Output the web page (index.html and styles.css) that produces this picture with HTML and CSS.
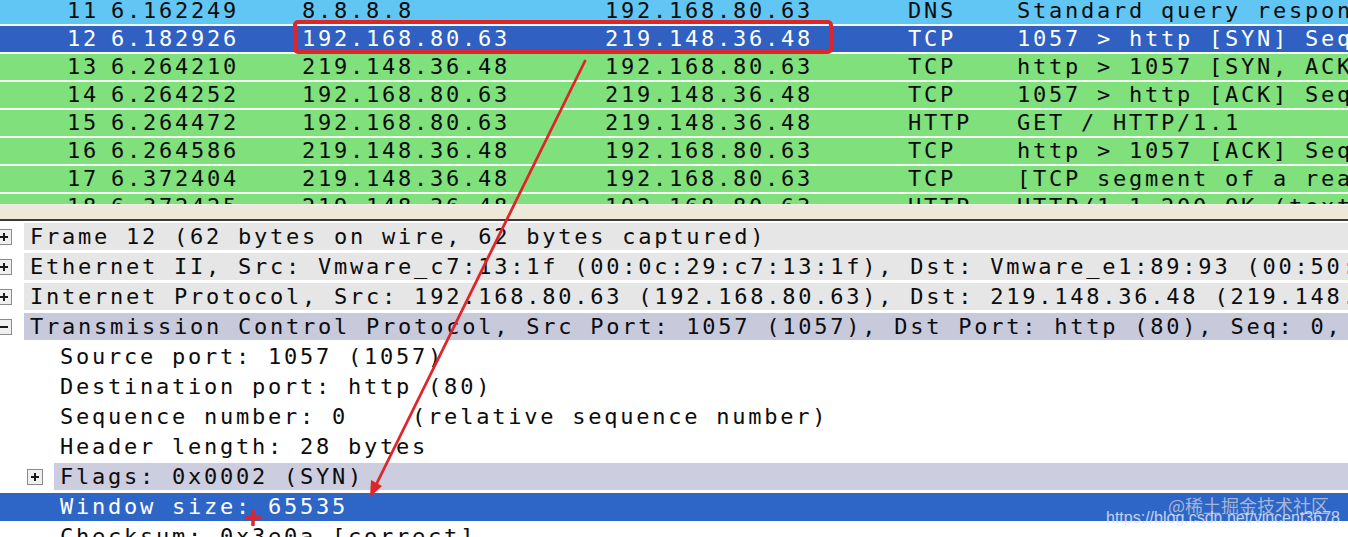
FILE: index.html
```html
<!DOCTYPE html>
<html>
<head>
<meta charset="utf-8">
<link rel="stylesheet" href="styles.css">
</head>
<body>
<div class="screen">
  <div class="packets">
    <div class="plist">
      <div class="prow dns"><span class="c-no">11</span><span class="c-time">6.162249</span><span class="c-src">8.8.8.8</span><span class="c-dst">192.168.80.63</span><span class="c-proto">DNS</span><span class="c-info">Standard query response A 219.148.36.48</span></div>
      <div class="prow sel"><span class="c-no">12</span><span class="c-time">6.182926</span><span class="c-src">192.168.80.63</span><span class="c-dst">219.148.36.48</span><span class="c-proto">TCP</span><span class="c-info">1057 &gt; http [SYN] Seq=0 Win=65535 Len=0</span></div>
      <div class="prow tcp"><span class="c-no">13</span><span class="c-time">6.264210</span><span class="c-src">219.148.36.48</span><span class="c-dst">192.168.80.63</span><span class="c-proto">TCP</span><span class="c-info">http &gt; 1057 [SYN, ACK] Seq=0 Ack=1</span></div>
      <div class="prow tcp"><span class="c-no">14</span><span class="c-time">6.264252</span><span class="c-src">192.168.80.63</span><span class="c-dst">219.148.36.48</span><span class="c-proto">TCP</span><span class="c-info">1057 &gt; http [ACK] Seq=1 Ack=1</span></div>
      <div class="prow tcp"><span class="c-no">15</span><span class="c-time">6.264472</span><span class="c-src">192.168.80.63</span><span class="c-dst">219.148.36.48</span><span class="c-proto">HTTP</span><span class="c-info">GET / HTTP/1.1</span></div>
      <div class="prow tcp"><span class="c-no">16</span><span class="c-time">6.264586</span><span class="c-src">219.148.36.48</span><span class="c-dst">192.168.80.63</span><span class="c-proto">TCP</span><span class="c-info">http &gt; 1057 [ACK] Seq=1 Ack=320</span></div>
      <div class="prow tcp"><span class="c-no">17</span><span class="c-time">6.372404</span><span class="c-src">219.148.36.48</span><span class="c-dst">192.168.80.63</span><span class="c-proto">TCP</span><span class="c-info">[TCP segment of a reassembled PDU]</span></div>
      <div class="prow tcp"><span class="c-no">18</span><span class="c-time">6.372425</span><span class="c-src">219.148.36.48</span><span class="c-dst">192.168.80.63</span><span class="c-proto">HTTP</span><span class="c-info">HTTP/1.1 200 OK (text/html)</span></div>
    </div>
  </div>
  <div class="splitter"></div>
  <div class="details">
    <div class="drow"><span class="exp"><svg class="box" width="16" height="16" viewBox="0 0 16 16"><rect x="0.5" y="0.5" width="15" height="15" fill="#f0f0f0" stroke="#8a8a8a"/><path d="M4 8h8M8 4v8" stroke="#1a1a1a" stroke-width="2"/></svg></span><span class="label gray">Frame 12 (62 bytes on wire, 62 bytes captured)</span></div>
    <div class="drow"><span class="exp"><svg class="box" width="16" height="16" viewBox="0 0 16 16"><rect x="0.5" y="0.5" width="15" height="15" fill="#f0f0f0" stroke="#8a8a8a"/><path d="M4 8h8M8 4v8" stroke="#1a1a1a" stroke-width="2"/></svg></span><span class="label gray">Ethernet II, Src: Vmware_c7:13:1f (00:0c:29:c7:13:1f), Dst: Vmware_e1:89:93 (00:50:56:e1:89:93)</span></div>
    <div class="drow"><span class="exp"><svg class="box" width="16" height="16" viewBox="0 0 16 16"><rect x="0.5" y="0.5" width="15" height="15" fill="#f0f0f0" stroke="#8a8a8a"/><path d="M4 8h8M8 4v8" stroke="#1a1a1a" stroke-width="2"/></svg></span><span class="label gray">Internet Protocol, Src: 192.168.80.63 (192.168.80.63), Dst: 219.148.36.48 (219.148.36.48)</span></div>
    <div class="drow"><span class="exp"><svg class="box" width="16" height="16" viewBox="0 0 16 16"><rect x="0.5" y="0.5" width="15" height="15" fill="#f0f0f0" stroke="#8a8a8a"/><path d="M4 8h8" stroke="#1a1a1a" stroke-width="2"/></svg></span><span class="label lav">Transmission Control Protocol, Src Port: 1057 (1057), Dst Port: http (80), Seq: 0, Len: 0</span></div>
    <div class="drow child"><span class="exp"></span><span class="label">Source port: 1057 (1057)</span></div>
    <div class="drow child"><span class="exp"></span><span class="label">Destination port: http (80)</span></div>
    <div class="drow child"><span class="exp"></span><span class="label">Sequence number: 0    (relative sequence number)</span></div>
    <div class="drow child"><span class="exp"></span><span class="label">Header length: 28 bytes</span></div>
    <div class="drow child"><span class="exp"><svg class="box" width="16" height="16" viewBox="0 0 16 16"><rect x="0.5" y="0.5" width="15" height="15" fill="#f0f0f0" stroke="#8a8a8a"/><path d="M4 8h8M8 4v8" stroke="#1a1a1a" stroke-width="2"/></svg></span><span class="label lav2">Flags: 0x0002 (SYN)</span></div>
    <div class="drow child sel"><span class="exp"></span><span class="label">Window size: 65535</span></div>
    <div class="drow child"><span class="exp"></span><span class="label">Checksum: 0x3e0a [correct]</span></div>
  </div>

  <svg class="annot" width="1348" height="537" viewBox="0 0 1348 537">
    <rect x="295" y="22" width="536" height="30" rx="3" fill="none" stroke="#e0252a" stroke-width="4"/>
    <line x1="585" y1="61" x2="374" y2="489" stroke="#e0252a" stroke-width="2.8" stroke-linecap="round"/>
    <polygon points="370,497 382,486 371,480" fill="#e0252a"/>
    <path d="M245 518h16M253 510v16" stroke="#e0252a" stroke-width="3.5"/>
  </svg>
  <div class="wm-cn">@稀土掘金技术社区</div>
  <div class="wm-url">https://blog.csdn.net/vincent3678</div>
</div>
</body>
</html>
```

FILE: styles.css
```css
html, body {
  margin: 0;
  padding: 0;
  background: #ffffff;
  overflow: hidden;
}

.screen {
  position: relative;
  width: 1348px;
  height: 537px;
  overflow: hidden;
  font-family: "DejaVu Sans Mono", monospace;
  font-size: 22px;
  letter-spacing: 2.76px;
  color: #0c0c0c;
}

.packets {
  height: 204px;
  overflow: hidden;
  background: #f4fbf4;
}

.plist {
  margin-top: -2px;
}

.prow {
  display: grid;
  grid-template-columns: 99px 203px 303px 303px 109px 1fr;
  height: 26px;
  line-height: 26px;
  margin-bottom: 2px;
  white-space: pre;
}

.prow span {
  overflow: hidden;
}

.prow .c-no {
  text-align: right;
}

.prow .c-time {
  padding-left: 12px;
}

.prow.dns {
  background: #62c6f4;
}

.prow.tcp {
  background: #7fe07c;
}

.prow.sel {
  background: #2f60c2;
  color: #ffffff;
}

.splitter {
  height: 14px;
  border-top: 1px solid #f6f6f0;
  background: #ece9d8;
  border-bottom: 2px solid #3a3a3a;
}

.details {
  padding-top: 2px;
}

.drow {
  display: flex;
  align-items: center;
  height: 27px;
  margin-bottom: 3px;
}

.drow.child {
  padding-left: 30px;
}

.exp {
  flex: none;
  width: 24px;
  height: 100%;
  display: flex;
  align-items: center;
}

.exp .box {
  margin-left: -4px;
  display: block;
}

.drow.child .exp .box {
  margin-left: -3px;
}

.label {
  flex: 1;
  height: 100%;
  line-height: 27px;
  padding-left: 6px;
  white-space: pre;
  overflow: hidden;
}

.label.gray {
  background: #e6e6e6;
}

.label.lav {
  background: #c9c9dc;
}

.label.lav2 {
  background: #cdcde0;
}

.drow.sel {
  height: 28px;
  margin-bottom: 2px;
  background: #2e66c8;
  color: #ffffff;
}

.drow.sel .label {
  line-height: 28px;
}

.annot {
  position: absolute;
  left: 0;
  top: 0;
  pointer-events: none;
}

.wm-cn {
  position: absolute;
  left: 1168px;
  top: 493px;
  font-family: "Noto Sans CJK SC", sans-serif;
  font-size: 18px;
  letter-spacing: 0;
  line-height: 24px;
  color: rgba(190, 196, 214, 0.85);
}

.wm-url {
  position: absolute;
  left: 1106px;
  top: 508px;
  font-family: "Liberation Sans", Arial, sans-serif;
  font-size: 16px;
  letter-spacing: 0;
  line-height: 20px;
  color: rgba(225, 230, 242, 0.85);
}
```
